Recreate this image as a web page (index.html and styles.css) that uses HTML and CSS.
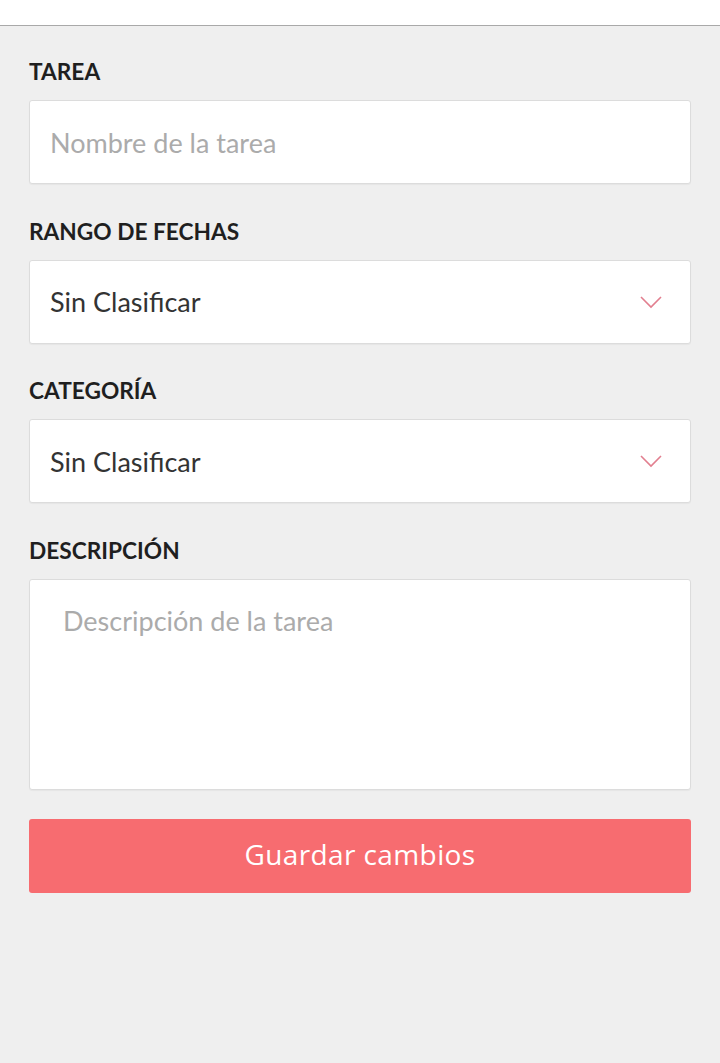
FILE: index.html
```html
<!DOCTYPE html>
<html lang="es">
<head>
    <meta charset="UTF-8">
    <meta name="viewport" content="width=device-width, initial-scale=1.0">
    <title>Editar tarea</title>
    <link rel="stylesheet" href="styles.css">
</head>
<body>
    <div class="top-bar"></div>

    <form class="task-form">
        <div class="form-group">
            <label for="taskName">TAREA</label>
            <input type="text" id="taskName" class="field" placeholder="Nombre de la tarea">
        </div>

        <div class="form-group">
            <label>RANGO DE FECHAS</label>
            <div class="field select-field">
                <span>Sin Clasificar</span>
                <svg class="chevron" width="22" height="14" viewBox="0 0 22 14">
                    <polyline points="1,2 11,12 21,2" fill="none" stroke="#e27f8f" stroke-width="1.6"/>
                </svg>
            </div>
        </div>

        <div class="form-group">
            <label>CATEGORÍA</label>
            <div class="field select-field">
                <span>Sin Clasificar</span>
                <svg class="chevron" width="22" height="14" viewBox="0 0 22 14">
                    <polyline points="1,2 11,12 21,2" fill="none" stroke="#e27f8f" stroke-width="1.6"/>
                </svg>
            </div>
        </div>

        <div class="form-group">
            <label for="taskDesc">DESCRIPCIÓN</label>
            <textarea id="taskDesc" class="field area" placeholder="Descripción de la tarea"></textarea>
        </div>

        <button type="button" class="save-button">Guardar cambios</button>
    </form>
</body>
</html>
```

FILE: styles.css
```css
body {
    font-family: 'Lato', 'Open Sans', sans-serif;
    margin: 0;
    background-color: #efefef;
    color: #333;
}

.top-bar {
    height: 25px;
    background-color: #fff;
    border-bottom: 1px solid #a9a9a9;
}

.task-form {
    padding: 30px 29px 0 29px;
}

.form-group {
    margin-bottom: 31.5px;
}

label {
    display: block;
    font-size: 22.7px;
    font-weight: bold;
    color: #1f1f1f;
    line-height: 32px;
    margin-bottom: 12px;
}

.field {
    display: block;
    width: 100%;
    height: 84px;
    box-sizing: border-box;
    padding: 0 20px;
    background-color: #fff;
    border: 1px solid #dcdcdc;
    border-radius: 3px;
    box-shadow: 0 1px 1px rgba(0, 0, 0, 0.04);
    font-family: 'Lato', sans-serif;
    font-size: 27px;
    color: #333;
    outline: none;
}

.field::placeholder {
    color: #ababab;
}

.select-field {
    display: flex;
    align-items: center;
    justify-content: space-between;
}

.chevron {
    margin-right: 8px;
}

.area {
    height: 211px;
    padding: 25px 33px;
    resize: none;
    line-height: 32px;
}

.save-button {
    display: block;
    width: 100%;
    height: 74px;
    margin-top: -2.5px;
    padding-bottom: 4px;
    background-color: #f76c70;
    color: #fff;
    border: none;
    border-radius: 3px;
    font-family: 'Open Sans', sans-serif;
    font-size: 28px;
    font-weight: 500;
    letter-spacing: 0.4px;
    cursor: pointer;
}
```
